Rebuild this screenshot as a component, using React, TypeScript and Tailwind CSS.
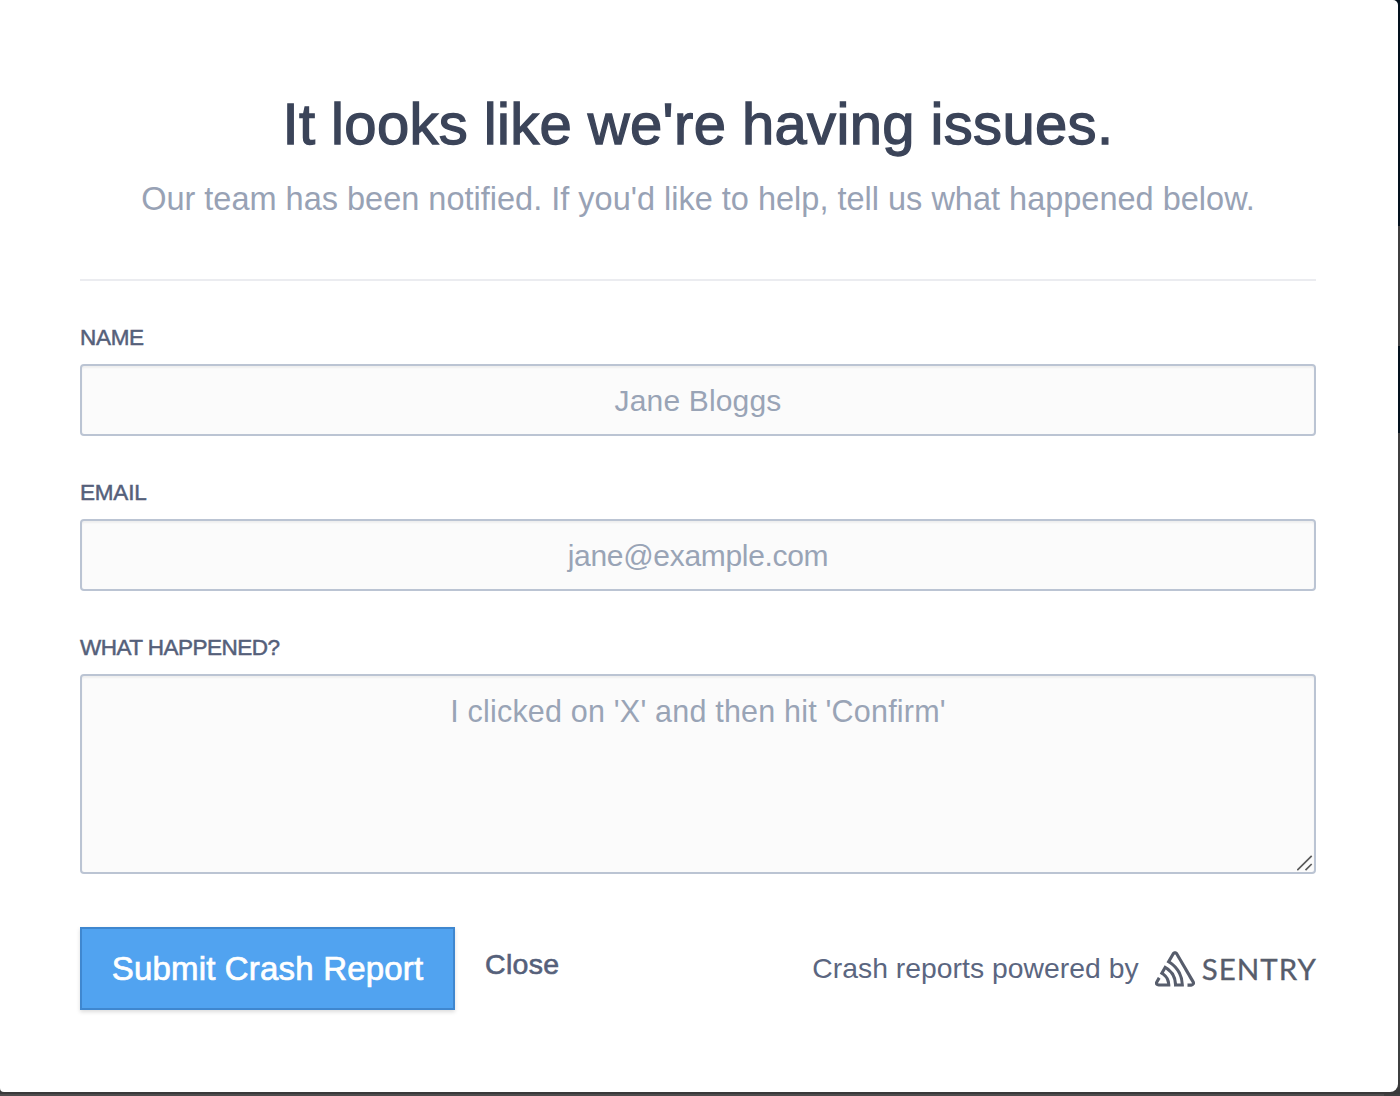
import React from "react";
import { SiSentry } from "react-icons/si";

const labelClass =
  "block h-6 text-[22.5px] leading-[26px] text-[#55607a] uppercase [-webkit-text-stroke:0.5px_#55607a]";
const fieldClass =
  "block w-full resize-none rounded-[4px] border-2 border-[#bbc4d3] bg-[#fbfbfb] text-center text-[#3b4459] shadow-[inset_0_2px_2px_rgba(0,0,0,0.05)] outline-none placeholder:text-[#99a4b6] placeholder:opacity-100";

function SubmitButton() {
  return (
    <button className="h-[83px] w-[375px] border-2 border-[#3f87cf] bg-[#51a3f0] text-[33px] tracking-[0.18px] text-white shadow-[0_2px_4px_rgba(0,0,0,0.14)] [-webkit-text-stroke:0.7px_white]">
      Submit Crash Report
    </button>
  );
}

function PoweredBy() {
  return (
    <div className="ml-auto flex items-center">
      <span className="mr-4 text-[28.3px] tracking-[0.03px] text-[#5b6680]">
        Crash reports powered by
      </span>
      <SiSentry className="size-10 text-[#575d6c]" />
      <span className="ml-[7px] -mr-[1px] font-['Lato'] text-[29.5px] leading-10 tracking-[1.05px] text-[#575d6c] [-webkit-text-stroke:0.3px_#575d6c]">
        SENTRY
      </span>
    </div>
  );
}

export default function App() {
  return (
    <div className="relative h-[1096px] w-[1400px] overflow-hidden bg-[#4e4b4c] font-['Liberation_Sans',sans-serif]">
      {/* page content showing behind the dialog edges */}
      <div className="absolute inset-y-0 right-0 flex w-4 flex-col">
        <div className="h-[226px] bg-[#02101d]" />
        <div className="h-[120px] bg-[#3f3f40]" />
        <div className="h-[87px] bg-[#02101d]" />
        <div className="flex-1 bg-[#3f3f40]" />
      </div>
      <div className="absolute inset-x-0 top-[1080px] h-[14px] bg-[#3a393a]" />

      <div className="relative h-[1092px] w-[1398px] rounded-tr-[5px] rounded-br-[8px] rounded-bl-[4px] bg-white pt-[92px] pr-[82px] pl-20">
        <header className="border-b-2 border-[#ebecf0] pb-[60px] text-center">
          <h1 className="text-[58px] leading-[64px] tracking-[0.35px] [word-spacing:-0.9px] whitespace-nowrap text-[#3b4459] [-webkit-text-stroke:1.3px_#3b4459]">
            It looks like we're having issues.
          </h1>
          <p className="mt-[23px] text-[32.5px] leading-10 whitespace-nowrap text-[#98a2b5]">
            Our team has been notified. If you'd like to help, tell us what happened below.
          </p>
        </header>

        <form className="flex flex-col gap-11 pt-11" onSubmit={(e) => e.preventDefault()}>
          <div>
            <label className={`${labelClass} tracking-[-0.3px]`} htmlFor="name">Name</label>
            <input
              id="name"
              className={`${fieldClass} mt-[15px] h-[72px] pt-0.5 text-[30px] tracking-[0.15px]`}
              placeholder="Jane Bloggs"
            />
          </div>
          <div>
            <label className={`${labelClass} tracking-[-0.2px]`} htmlFor="email">Email</label>
            <input
              id="email"
              className={`${fieldClass} mt-[15px] h-[72px] pt-0.5 text-[30px] tracking-[-0.32px]`}
              placeholder="jane@example.com"
            />
          </div>
          <div>
            <label className={`${labelClass} tracking-[-0.52px]`} htmlFor="comments">What happened?</label>
            <div className="relative mt-[15px]">
              <textarea
                id="comments"
                className={`${fieldClass} h-[200px] pt-[17px] text-[30.5px] leading-9 tracking-[0.2px]`}
                placeholder="I clicked on 'X' and then hit 'Confirm'"
              />
              <svg
                className="absolute right-[3px] bottom-[3px] size-4"
                viewBox="0 0 16 16"
                fill="none"
                stroke="#5a5a5a"
                strokeWidth="1.7"
              >
                <path d="M.3 15.2 14.7.8M8.5 15.2l6.2-6.2" />
              </svg>
            </div>
          </div>
          <div className="mt-[9px] flex items-center">
            <SubmitButton />
            <button className="mb-[9px] ml-[30px] text-[28.5px] tracking-[0.3px] text-[#55607a] [-webkit-text-stroke:0.6px_#55607a]">
              Close
            </button>
            <PoweredBy />
          </div>
        </form>
      </div>
    </div>
  );
}
